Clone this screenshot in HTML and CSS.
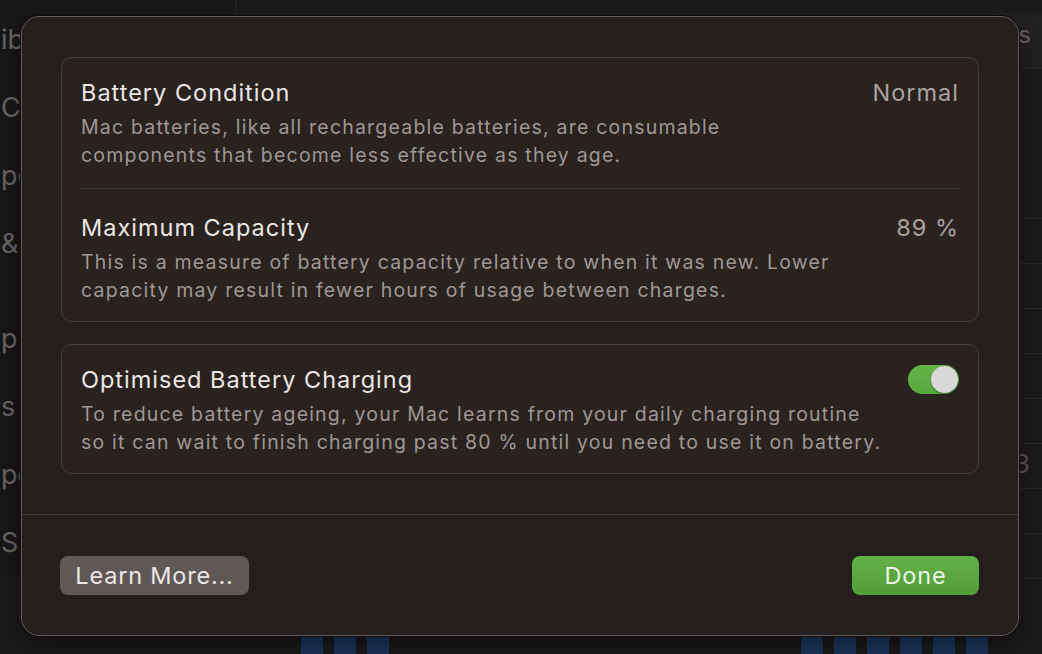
FILE: index.html
```html
<!DOCTYPE html>
<html lang="en">
<head>
    <meta charset="UTF-8">
    <meta name="viewport" content="width=device-width, initial-scale=1.0">
    <title>Battery Health</title>
    <link rel="stylesheet" href="styles.css">
</head>
<body>

<div class="backdrop">
    <div class="sidebar">
        <div class="side-item">ib</div>
        <div class="side-item">C</div>
        <div class="side-item">pe</div>
        <div class="side-item">&amp;</div>
        <div class="side-item side-gap">p</div>
        <div class="side-item">s</div>
        <div class="side-item">pe</div>
        <div class="side-item">S</div>
    </div>
    <div class="main">
        <div class="main-head"><span class="head-label">Items</span></div>
        <div class="main-rows">
            <div class="row"></div>
            <div class="row"></div>
            <div class="row"></div>
            <div class="row"></div>
            <div class="row"></div>
            <div class="row"></div>
            <div class="row"><span class="row-label">3</span></div>
            <div class="row"></div>
            <div class="row"></div>
        </div>
        <div class="chart">
            <div class="bar-group first">
                <span class="bar"></span><span class="bar"></span><span class="bar"></span>
            </div>
            <div class="bar-group second">
                <span class="bar"></span><span class="bar"></span><span class="bar"></span>
                <span class="bar"></span><span class="bar"></span><span class="bar"></span>
            </div>
        </div>
    </div>
</div>

<div class="dialog">
    <div class="dialog-body">
        <div class="card">
            <div class="setting">
                <div class="setting-text">
                    <div class="setting-title">Battery Condition</div>
                    <div class="setting-desc">Mac batteries, like all rechargeable batteries, are consumable<br>components that become less effective as they age.</div>
                </div>
                <div class="setting-value">Normal</div>
            </div>
            <div class="setting">
                <div class="setting-text">
                    <div class="setting-title">Maximum Capacity</div>
                    <div class="setting-desc">This is a measure of battery capacity relative to when it was new. Lower<br>capacity may result in fewer hours of usage between charges.</div>
                </div>
                <div class="setting-value">89 %</div>
            </div>
        </div>

        <div class="card">
            <div class="setting">
                <div class="setting-text">
                    <div class="setting-title">Optimised Battery Charging</div>
                    <div class="setting-desc">To reduce battery ageing, your Mac learns from your daily charging routine<br>so it can wait to finish charging past 80 % until you need to use it on battery.</div>
                </div>
                <div class="toggle on"><span class="knob"></span></div>
            </div>
        </div>
    </div>

    <div class="dialog-footer">
        <button type="button" class="btn btn-secondary">Learn More...</button>
        <button type="button" class="btn btn-primary">Done</button>
    </div>
</div>

</body>
</html>
```

FILE: styles.css
```css
body {
    margin: 0;
    padding: 0;
    width: 1042px;
    height: 654px;
    overflow: hidden;
    background: #1d1a1a;
    font-family: Inter, "Noto Sans", sans-serif;
    color: #e6e2e1;
}

/* window behind the sheet */
.backdrop {
    display: flex;
    height: 654px;
}

.sidebar {
    width: 236px;
    height: 575px;
    padding-top: 22px;
    background: #191717;
    border-right: 1px solid #2b2828;
    box-sizing: border-box;
}

.side-item {
    height: 68px;
    line-height: 36px;
    font-size: 27px;
    color: #6d6969;
    padding-left: 1px;
}

.side-gap {
    margin-top: 27px;
}

.main {
    flex: 1;
    display: flex;
    flex-direction: column;
}

.main-head {
    height: 56px;
    margin-top: 13px;
    background: #232020;
    border-left: 1px solid #2b2828;
    margin-left: 40px;
    border-bottom: 1px solid #2e2b2b;
    text-align: right;
    padding-right: 11px;
    box-sizing: border-box;
}

.head-label {
    font-size: 24px;
    line-height: 44px;
    color: #6a6666;
}

.main-rows {
    margin-top: 105px;
}

.row {
    height: 45px;
    border-bottom: 1px solid #2c2929;
    box-sizing: border-box;
    text-align: right;
}

.row-label {
    font-size: 26px;
    line-height: 40px;
    color: #5a5656;
    padding-right: 12px;
}

.chart {
    flex: 1;
    display: flex;
    align-items: flex-end;
    padding-left: 65px;
}

.bar-group {
    display: flex;
    gap: 11px;
}

.bar-group.second {
    margin-left: 412px;
}

.bar {
    width: 22px;
    height: 40px;
    background: #1d3862;
}

/* the sheet */
.dialog {
    position: absolute;
    left: 21px;
    top: 16px;
    width: 998px;
    height: 620px;
    box-sizing: border-box;
    background: #241e1d;
    border: 1px solid #645d5c;
    border-radius: 18px;
    box-shadow: 0 0 0 1px #0d0b0b, 0 10px 30px rgba(0, 0, 0, 0.5);
    display: flex;
    flex-direction: column;
}

.dialog-body {
    padding: 40px 39px 0;
    height: 498px;
    box-sizing: border-box;
    border-bottom: 1px solid #3e3837;
    display: flex;
    flex-direction: column;
    gap: 22px;
}

.card {
    background: #29221f;
    border: 1px solid #443d3c;
    border-radius: 10px;
    padding: 0 19px;
}

.setting {
    display: flex;
    justify-content: space-between;
    align-items: flex-start;
    padding: 21px 0 19px;
    border-bottom: 1px solid #3b3534;
}

.setting + .setting {
    padding-top: 25px;
}

.setting:last-child {
    border-bottom: none;
    padding-bottom: 17px;
}

.setting-title {
    font-size: 23.5px;
    line-height: 28px;
    letter-spacing: 1px;
    color: #ebe7e6;
}

.setting-desc {
    margin-top: 6px;
    font-size: 19.5px;
    line-height: 28px;
    letter-spacing: 1.2px;
    color: #9e9897;
}

.setting-value {
    font-size: 23.5px;
    line-height: 28px;
    letter-spacing: 1px;
    color: #a9a3a2;
}

.toggle {
    width: 51px;
    height: 29px;
    border-radius: 15px;
    background: #4a4443;
    display: flex;
    align-items: center;
    padding: 0 1px;
    box-sizing: border-box;
    margin-top: -1px;
}

.toggle.on {
    background: linear-gradient(#64b448, #58a83d);
    justify-content: flex-end;
}

.knob {
    width: 27px;
    height: 27px;
    border-radius: 50%;
    background: #d9d7d7;
    box-shadow: 0 1px 2px rgba(0, 0, 0, 0.35);
}

.dialog-footer {
    flex: 1;
    display: flex;
    justify-content: space-between;
    align-items: center;
    padding: 0 39px 0 38px;
}

.btn {
    height: 39px;
    border: none;
    border-radius: 8px;
    font-family: Inter, "Noto Sans", sans-serif;
    font-size: 23.5px;
    letter-spacing: 0.8px;
    padding: 0;
    cursor: pointer;
}

.btn-secondary {
    width: 189px;
    background: #5f5857;
    color: #ebe7e6;
}

.btn-primary {
    width: 127px;
    background: linear-gradient(#63b247, #519e36);
    color: #eef6ea;
}
```
